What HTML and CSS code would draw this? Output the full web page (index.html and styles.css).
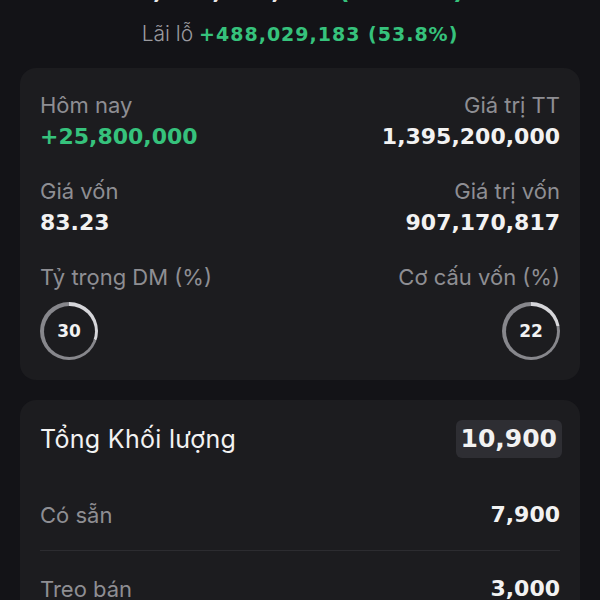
FILE: index.html
```html
<!DOCTYPE html>
<html lang="vi">

<head>
    <meta charset="UTF-8">
    <meta name="viewport" content="width=device-width, initial-scale=1.0">
    <title>danh muc</title>
    <link rel="stylesheet" href="styles.css">
</head>

<body>
    <div class="peek">
        <div class="peek-line">
            <span class="white">1,395,200,000</span>
            <span class="green">(+1.88%)</span>
        </div>
    </div>
    <p class="pnl">Lãi lỗ <span class="green">+488,029,183 (53.8%)</span></p>

    <div class="card stats">
        <div class="cell">
            <div class="label">Hôm nay</div>
            <div class="num green">+25,800,000</div>
        </div>
        <div class="cell right">
            <div class="label">Giá trị TT</div>
            <div class="num">1,395,200,000</div>
        </div>
        <div class="cell">
            <div class="label">Giá vốn</div>
            <div class="num">83.23</div>
        </div>
        <div class="cell right">
            <div class="label">Giá trị vốn</div>
            <div class="num">907,170,817</div>
        </div>
        <div class="cell">
            <div class="label">Tỷ trọng DM (%)</div>
            <div class="ring" style="--p: 30">
                <span>30</span>
            </div>
        </div>
        <div class="cell right">
            <div class="label">Cơ cấu vốn (%)</div>
            <div class="ring" style="--p: 22">
                <span>22</span>
            </div>
        </div>
    </div>

    <div class="card volume">
        <div class="row total">
            <span class="title">Tổng Khối lượng</span>
            <span class="num badge">10,900</span>
        </div>
        <div class="row">
            <span class="label">Có sẵn</span>
            <span class="num">7,900</span>
        </div>
        <div class="row line">
            <span class="label">Treo bán</span>
            <span class="num">3,000</span>
        </div>
    </div>
</body>

</html>
```

FILE: styles.css
```css
body {
    margin: 0;
    padding: 0;
    background-color: #131317;
    font-family: Inter, "Noto Sans", sans-serif;
    color: #f2f2f2;
}

.green {
    color: #36c27c;
}

.white {
    color: #e8e8e8;
}

/* the line above is scrolled away, only the bottom of it shows */
.peek {
    height: 2px;
    overflow: hidden;
    display: flex;
    align-items: flex-end;
    justify-content: center;
}

.peek-line {
    flex-shrink: 0;
    font-family: "DejaVu Sans", sans-serif;
    font-weight: bold;
    font-size: 24px;
    line-height: 24px;
    margin-bottom: -1px;
}

.pnl {
    margin: 18px 0 0;
    text-align: center;
    font-size: 21px;
    line-height: 28px;
    color: #9a9a9f;
    font-weight: 300;
}

.pnl .green {
    font-family: "DejaVu Sans", sans-serif;
    font-weight: bold;
    font-size: 19px;
    letter-spacing: 1px;
}

.card {
    margin: 0 20px;
    background-color: #1c1c1f;
    border-radius: 16px;
}

.stats {
    margin-top: 20px;
    padding: 23px 20px 20px;
    display: grid;
    grid-template-columns: 1fr 1fr;
    row-gap: 25px;
}

.cell {
    display: flex;
    flex-direction: column;
    gap: 3px;
}

.right {
    align-items: flex-end;
    text-align: right;
}

.label {
    font-size: 22px;
    line-height: 28px;
    color: #8e8e93;
}

.num {
    font-family: "DejaVu Sans", sans-serif;
    font-weight: bold;
    font-size: 22px;
    line-height: 30px;
}

.ring {
    width: 58px;
    height: 58px;
    margin-top: 8px;
    border-radius: 50%;
    background: conic-gradient(#d6d6da calc(var(--p) * 1%), #87878c 0);
    display: flex;
    align-items: center;
    justify-content: center;
}

.ring span {
    width: 51px;
    height: 51px;
    border-radius: 50%;
    background-color: #1c1c1f;
    display: flex;
    align-items: center;
    justify-content: center;
    font-family: "DejaVu Sans", sans-serif;
    font-weight: bold;
    font-size: 17px;
}

.volume {
    margin-top: 20px;
    padding: 18px 20px 0;
}

.row {
    display: flex;
    justify-content: space-between;
    align-items: center;
    height: 70px;
}

.row.total {
    height: 42px;
    margin-bottom: 20px;
}

.row.line {
    height: 76px;
    border-top: 1px solid #2c2c30;
}

.title {
    font-size: 25px;
    letter-spacing: 0.3px;
}

.badge {
    font-size: 25px;
    background-color: #2e2e33;
    border-radius: 6px;
    padding: 4px 5px;
    margin-right: -2px;
}
```
